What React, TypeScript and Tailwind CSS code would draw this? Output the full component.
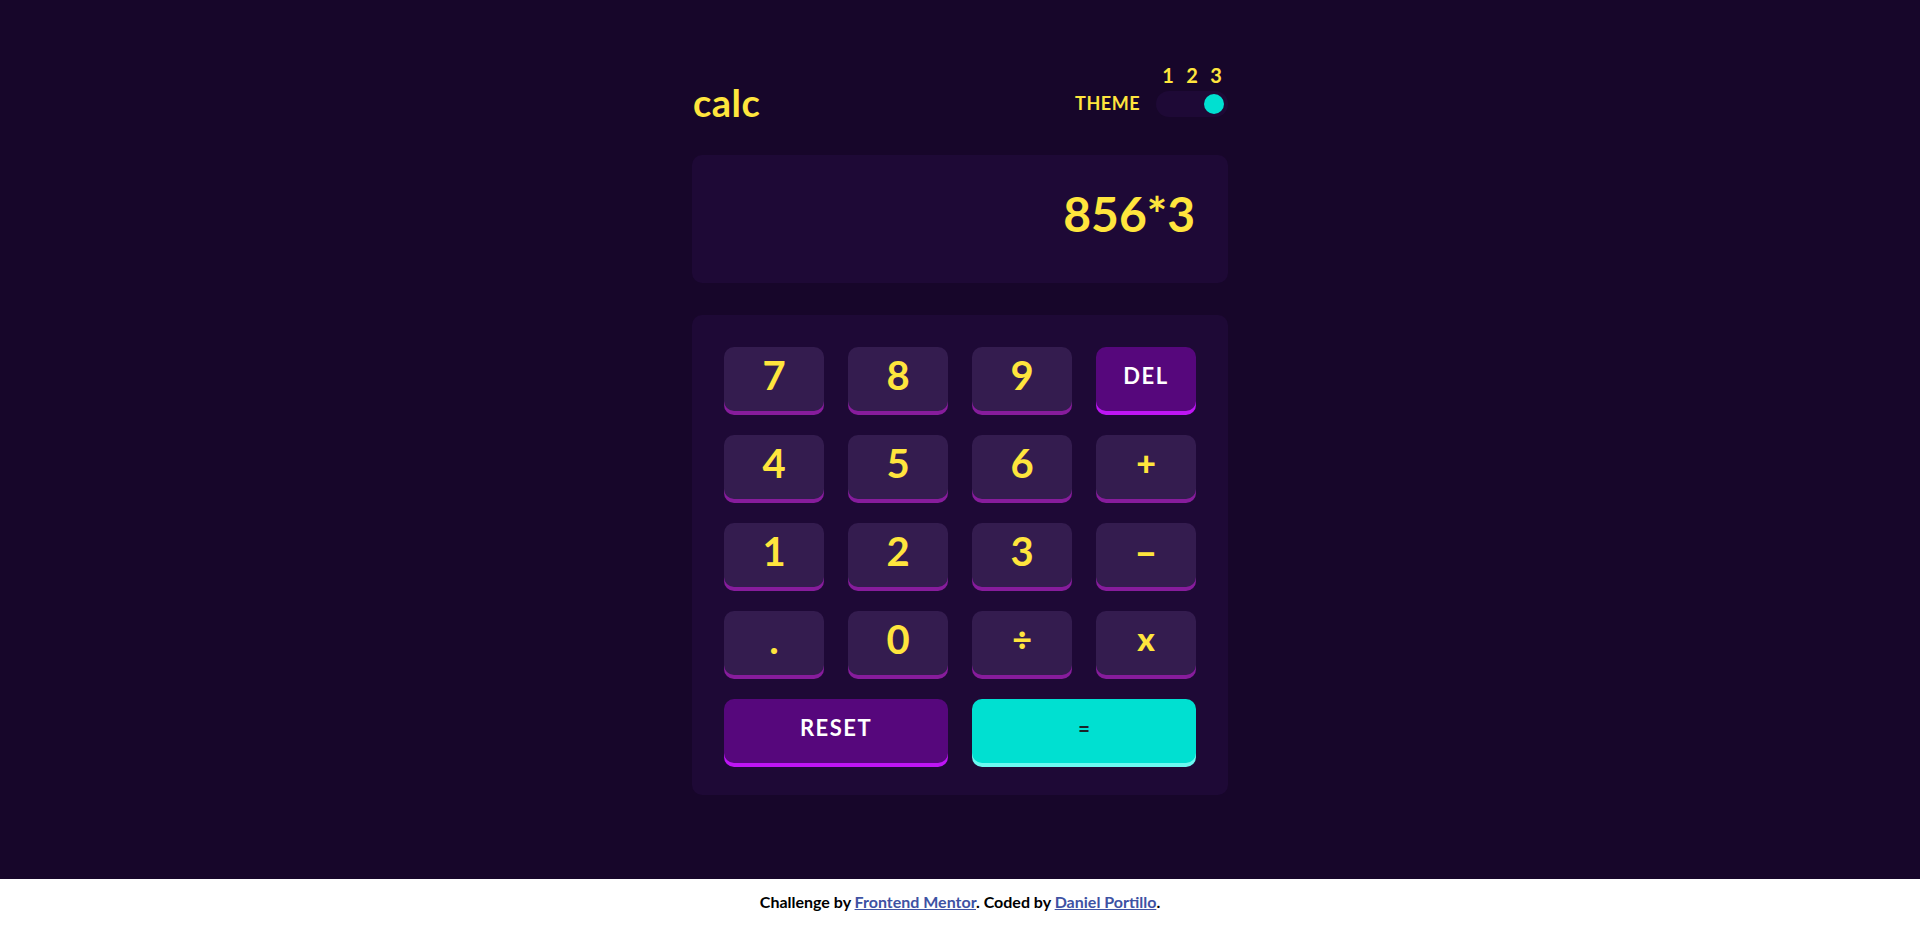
import React from "react";

type Key = {
  label: string;
  kind: "num" | "op" | "del" | "reset" | "eq";
  cls?: string;
};

const rows: Key[] = [
  { label: "7", kind: "num" },
  { label: "8", kind: "num" },
  { label: "9", kind: "num" },
  { label: "DEL", kind: "del" },
  { label: "4", kind: "num" },
  { label: "5", kind: "num" },
  { label: "6", kind: "num" },
  { label: "+", kind: "op", cls: "text-[34px] pb-[8px]" },
  { label: "1", kind: "num" },
  { label: "2", kind: "num" },
  { label: "3", kind: "num" },
  { label: "−", kind: "op", cls: "text-[36px] pb-[6px]" },
  { label: ".", kind: "num" },
  { label: "0", kind: "num" },
  { label: "÷", kind: "op", cls: "text-[34px] pb-[8px]" },
  { label: "x", kind: "op", cls: "text-[33px] pb-[10px]" },
];

function KeyButton({ k }: { k: Key }) {
  if (k.kind === "del") {
    return (
      <button className="h-[64px] rounded-[10px] bg-[#56077c] shadow-[0_4px_0_#be15f4] flex items-center justify-center pb-[6px] text-white text-[22px] font-bold tracking-[1.5px] leading-none">
        {k.label}
      </button>
    );
  }
  const base =
    "h-[64px] rounded-[10px] bg-[#341c4f] shadow-[0_4px_0_#871c9c] flex items-center justify-center text-[#ffe53d] leading-none";
  if (k.kind === "op") {
    return <button className={`${base} font-black ${k.cls}`}>{k.label}</button>;
  }
  return <button className={`${base} font-bold text-[40px] pb-[8px]`}>{k.label}</button>;
}

export default function App() {
  return (
    <div className="min-h-screen flex flex-col font-[Lato,sans-serif]">
      <main className="flex-1 bg-[#17062a]">
        <div className="w-[536px] mx-auto pt-[65px]">
          {/* header */}
          <div className="flex items-end justify-between">
            <div className="text-[38px] font-bold text-[#ffe53d] leading-none mb-[-4px] tracking-[0.5px] pl-[1px]">
              calc
            </div>
            <div className="flex items-end gap-[16px]">
              <div className="text-[18px] font-bold text-[#ffe53d] leading-none tracking-[0.5px] mb-[5px]">
                THEME
              </div>
              <div className="flex flex-col w-[72px]">
                <div className="grid grid-cols-3 h-[20px] text-[20px] leading-[20px] font-bold text-[#ffe53d] text-center">
                  <span>1</span>
                  <span>2</span>
                  <span>3</span>
                </div>
                <div className="mt-[6px] h-[26px] rounded-full bg-[#1e0936] flex items-center justify-end px-[4px]">
                  <div className="w-[20px] h-[20px] rounded-full bg-[#00e0d1]" />
                </div>
              </div>
            </div>
          </div>

          {/* display */}
          <div className="mt-[38px] h-[128px] rounded-[10px] bg-[#1e0936] flex items-center justify-end pr-[33px] pb-[11px]">
            <span className="text-[48px] font-bold leading-none text-[#ffe53d]">856*3</span>
          </div>

          {/* keypad */}
          <div className="mt-[32px] rounded-[10px] bg-[#1e0936] p-[32px]">
            <div className="grid grid-cols-4 gap-[24px]">
              {rows.map((k, i) => (
                <KeyButton key={i} k={k} />
              ))}
              <button className="col-span-2 h-[64px] rounded-[10px] bg-[#56077c] shadow-[0_4px_0_#be15f4] flex items-center justify-center pb-[6px] text-white text-[22px] font-bold tracking-[1.5px] leading-none">
                RESET
              </button>
              <button className="col-span-2 h-[64px] rounded-[10px] bg-[#00e0d1] shadow-[0_4px_0_#6cf9f1] flex items-center justify-center pb-[6px] text-[#1b2428] text-[20px] font-black leading-none">
                =
              </button>
            </div>
          </div>
        </div>
      </main>
      <footer className="h-[48px] bg-white flex items-center justify-center pb-[3px] text-[16px] font-bold text-black">
        <p>
          Challenge by{" "}
          <a href="#" className="text-[#3e52a3] underline">
            Frontend Mentor
          </a>
          . Coded by{" "}
          <a href="#" className="text-[#3e52a3] underline">
            Daniel Portillo
          </a>
          .
        </p>
      </footer>
    </div>
  );
}
